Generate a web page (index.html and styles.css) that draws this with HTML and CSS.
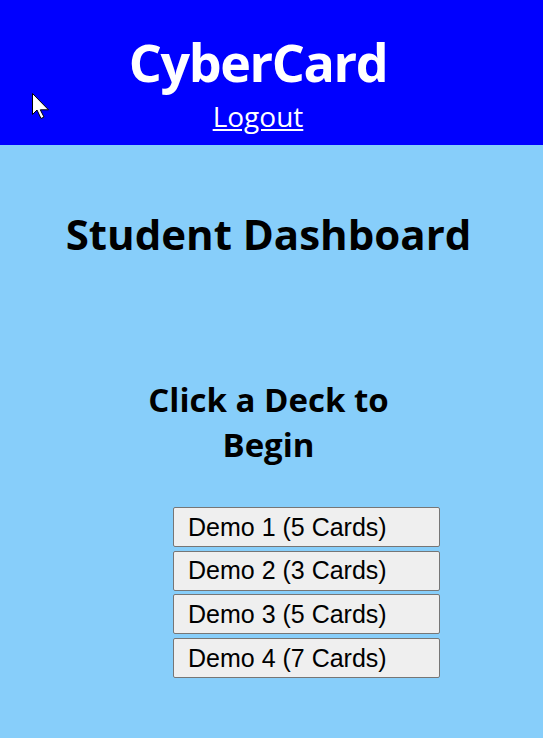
FILE: index.html
```html
<!DOCTYPE html>
<html>
<head>
<meta charset="utf-8">
<link rel="stylesheet" href="styles.css">
</head>
<body>
<header class="topbar">
  <h1 class="brand">CyberCard</h1>
  <a class="logout" href="#">Logout</a>
</header>
<main class="content">
  <h2 class="title">Student Dashboard</h2>
  <h3 class="prompt">Click a Deck to Begin</h3>
  <div class="decks">
    <button class="deck">Demo 1 (5 Cards)</button>
    <button class="deck">Demo 2 (3 Cards)</button>
    <button class="deck">Demo 3 (5 Cards)</button>
    <button class="deck">Demo 4 (7 Cards)</button>
  </div>
</main>
<svg class="cursor" width="18" height="27" viewBox="0 0 18 27">
  <path d="M0.5 0.5 L0.5 21.5 L5 17 L9 25.5 L12 24 L8.3 16.8 L16.5 16.8 Z" fill="#fff" stroke="#000" stroke-width="1" stroke-linejoin="miter"/>
</svg>
</body>
</html>
```
FILE: styles.css
```css
html, body {
  margin: 0;
  padding: 0;
}
body {
  background: #87cefa;
  min-height: 738px;
  font-family: "Open Sans", "Noto Sans", sans-serif;
}
.topbar {
  background: #0000ff;
  height: 145px;
  box-sizing: border-box;
  padding: 29px 27px 0 0;
  display: flex;
  flex-direction: column;
  align-items: center;
}
.brand {
  margin: 0;
  color: #fff;
  font-size: 52px;
  line-height: 66px;
  font-weight: 700;
  letter-spacing: -1.4px;
}
.logout {
  margin-top: 4px;
  color: #fff;
  font-size: 28px;
  line-height: 34px;
}
.content {
  display: flex;
  flex-direction: column;
  align-items: center;
  padding-right: 6px;
}
.title {
  margin: 61px 0 0;
  font-size: 42px;
  line-height: 56px;
  font-weight: 700;
}
.prompt {
  margin: 115px 0 0;
  width: 270px;
  text-align: center;
  font-size: 33px;
  line-height: 45px;
  font-weight: 700;
}
.decks {
  align-self: stretch;
  padding-left: 173px;
  margin-top: 40px;
  display: flex;
  flex-direction: column;
  gap: 3.7px;
}
.deck {
  width: 267px;
  height: 40px;
  text-align: left;
  padding: 0 0 0 14px;
  font-family: "Liberation Sans", Arial, sans-serif;
  font-size: 25px;
  color: #000;
  background: #efefef;
  border: 1px solid #767676;
  border-radius: 2px;
}
.cursor {
  position: absolute;
  left: 31.5px;
  top: 92.5px;
}
```
